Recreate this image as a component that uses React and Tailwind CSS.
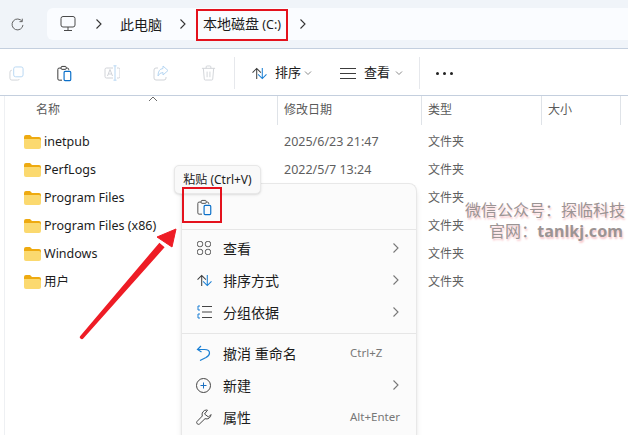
import React from 'react';

const FONT = 'font-["Noto_Sans","Noto_Sans_CJK_SC",sans-serif]';

const rows = [
  { name: 'inetpub', date: '2025/6/23 21:47' },
  { name: 'PerfLogs', date: '2022/5/7 13:24' },
  { name: 'Program Files', date: '' },
  { name: 'Program Files (x86)', date: '' },
  { name: 'Windows', date: '' },
  { name: '用户', date: '' },
];

const Chevron = ({ className = '' }) => (
  <svg width="8" height="12" viewBox="0 0 8 12" fill="none" stroke="currentColor" strokeWidth="1.1" className={className}>
    <path d="M1.5 1.5 6 6l-4.500 4.500" />
  </svg>
);

const SmallDown = () => (
  <svg width="8" height="6" viewBox="0 0 8 6" fill="none" stroke="#8a8a8a" strokeWidth="1">
    <path d="M1 1.500 4 4.500 7 1.500" />
  </svg>
);

const Folder = () => (
  <svg width="17" height="14" viewBox="0 0 17 14" className="shrink-0">
    <path d="M0 2q0-2 2-2h4l2 2h7q2 0 2 2v2H0z" fill="#eeaa10" />
    <path d="M0 4h15q2 0 2 2v6q0 2-2 2H2q-2 0-2-2z" fill="#fbd96f" />
  </svg>
);

const PasteIcon = ({ dark = '#3c3c3c', blue = '#0a6fc9' }) => (
  <svg width="15" height="17" viewBox="0 0 18 20" fill="none">
    <path d="M5 3.500H2.500q-1.500 0-1.500 1.500v11.500q0 1.500 1.500 1.500H6" stroke={dark} strokeWidth="1.200" />
    <path d="M11 3.500h1.500q1.500 0 1.500 1.500v1" stroke={dark} strokeWidth="1.200" />
    <rect x="5" y="1.500" width="6" height="3.500" rx="1" stroke={dark} strokeWidth="1.200" />
    <rect x="8.500" y="7.500" width="8" height="11" rx="1.200" stroke={blue} strokeWidth="1.400" />
  </svg>
);

const SortIcon = () => (
  <svg width="17" height="13" viewBox="0 0 18 14" fill="none" strokeWidth="1.100">
    <path d="M6 13V1.500M1.500 6 6 1.500 10.500 6" stroke="#3c3c3c" />
    <path d="M12 1v11.500M7.500 8l4.500 4.500L16.500 8" stroke="#1a7fd4" />
  </svg>
);

const ToolIcons = {
  copy: (
    <svg width="15" height="15" viewBox="0 0 16 16" fill="none">
      <path d="M3 4.500q-2 0-2 2V13q0 2 2 2h6q2 0 2-1" stroke="#d0d3d8" />
      <rect x="5" y="1" width="10" height="10.500" rx="2" stroke="#b6d6f2" />
    </svg>
  ),
  rename: (
    <svg width="16" height="16" viewBox="0 0 16 16" fill="none">
      <path d="M9 3H2.500Q1 3 1 4.500v7Q1 13 2.500 13H9M13 3h1.500Q16 3 16 4.500v7q0 1.500-1.500 1.500H13" stroke="#d0d3d8" />
      <path d="m3.500 11 2.500-6.500L8.500 11M4.500 9h3" stroke="#d0d3d8" />
      <path d="M11 1v14M9.500.8h3M9.500 15.200h3" stroke="#b6d6f2" />
    </svg>
  ),
  share: (
    <svg width="16" height="16" viewBox="0 0 16 16" fill="none">
      <path d="M5 3H3Q1 3 1 5v8q0 2 2 2h8q2 0 2-2v-1" stroke="#d0d3d8" />
      <path d="M10 1l5 4.500-5 4.500V7.500Q6.500 7.500 5 11 5 4 10 3.500z" stroke="#b6d6f2" />
    </svg>
  ),
  trash: (
    <svg width="15" height="16" viewBox="0 0 16 17" fill="none" stroke="#d0d3d8">
      <path d="M1 3.500h14M5.500 3.500V2q0-1 1-1h3q1 0 1 1v1.500M2.500 3.500l1 11.500q.1 1 1 1h7q.9 0 1-1l1-11.500M6.500 7v6M9.500 7v6" />
    </svg>
  ),
};

const MenuRow = ({ icon, label, hint, arrow }) => (
  <div className="flex h-8 items-center pl-[14px] pr-[16px]">
    <span className="flex w-[27px] shrink-0 justify-start">{icon}</span>
    <span className="flex-1 text-[14px] text-[#1c1c1c]">{label}</span>
    {hint && <span className="w-[50px] text-[11.500px] whitespace-nowrap text-[#777]">{hint}</span>}
    {arrow && <Chevron className="text-[#777]" />}
  </div>
);

const App = () => {
  return (
    <div className={`relative h-[435px] w-[628px] overflow-hidden bg-white ${FONT}`}>
      {/* address bar */}
      <div className="flex h-[49px] items-center border-b border-[#c4cfde] bg-[#f0f4f9] pl-[11px]">
        <svg width="13" height="13" viewBox="0 0 15 15" fill="none" stroke="#5c5c5c" strokeWidth="1.100" className="mr-[23px]">
          <path d="M12.800 4A6.300 6.300 0 1 0 13.800 8M13 .8V4.200H9.800" />
        </svg>
        <div className="flex h-8 flex-1 items-center rounded-l-md bg-[#fafcff] pl-[13px] text-[14px] text-[#1c1c1c]">
          <svg width="16" height="16" viewBox="0 0 15 16" fill="none" stroke="#4a4a4a" className="mr-[19px]">
            <rect x=".5" y=".5" width="14" height="10.500" rx="2" />
            <path d="M7.500 11v3M3.500 14.500h8" />
          </svg>
          <Chevron className="mr-[17px] text-[#333]" />
          <span>此电脑</span>
          <Chevron className="ml-[17px] mr-[16px] text-[#333]" />
          <span>
            本地磁盘<span className="text-[12.500px]"> (C:)</span>
          </span>
          <Chevron className="ml-[18px] text-[#333]" />
        </div>
      </div>

      {/* toolbar */}
      <div className="flex h-[47px] items-center border-b border-[#c4cfde] pl-[9px] pt-[2px] text-[13px] text-[#1c1c1c]">
        <span className="flex w-[48px]">{ToolIcons.copy}</span>
        <span className="flex w-[47px]"><PasteIcon /></span>
        <span className="flex w-[49px]">{ToolIcons.rename}</span>
        <span className="flex w-[48px]">{ToolIcons.share}</span>
        <span className="flex w-[33px]">{ToolIcons.trash}</span>
        <span className="mr-[16px] h-8 w-px bg-[#e6e8ec]" />
        <SortIcon />
        <span className="ml-[7px] mr-[3px]">排序</span>
        <SmallDown />
        <span className="ml-[28px] flex w-[16px] flex-col gap-[4px]">
          <span className="h-px bg-[#3c3c3c]" />
          <span className="h-px bg-[#3c3c3c]" />
          <span className="h-px bg-[#3c3c3c]" />
        </span>
        <span className="ml-[8px] mr-[5px]">查看</span>
        <SmallDown />
        <span className="ml-[16px] h-8 w-px bg-[#e6e8ec]" />
        <span className="ml-[16px] flex gap-[4px]">
          <span className="h-[3px] w-[3px] rounded-full bg-[#222]" />
          <span className="h-[3px] w-[3px] rounded-full bg-[#222]" />
          <span className="h-[3px] w-[3px] rounded-full bg-[#222]" />
        </span>
      </div>

      {/* file list */}
      <div className="ml-1 h-[340px] border-l border-[#eef0f3]">
        <div className="relative grid h-[29px] grid-cols-[272px_144px_120px_80px] text-[12px] text-[#5a5a5a]">
          <div className="pl-[31px] pt-[5px]">名称</div>
          <div className="border-l border-[#dfe3e8] pl-[6px] pt-[5px]">修改日期</div>
          <div className="border-l border-[#dfe3e8] pl-[6px] pt-[5px]">类型</div>
          <div className="border-l border-r border-[#dfe3e8] pl-[6px] pt-[5px]">大小</div>
          <svg width="10" height="6" viewBox="0 0 10 6" fill="none" stroke="#6a6a6a" className="absolute left-[143px] top-0">
            <path d="M1 5l4-4 4 4" />
          </svg>
        </div>
        <div className="pt-[3px]">
          {rows.map((row) => (
            <div key={row.name} className="grid h-7 grid-cols-[272px_144px_1fr] items-center text-[12.500px]">
              <div className="flex items-center gap-[3px] pl-[19px] text-[#1c1c1c]">
                <Folder />
                <span>{row.name}</span>
              </div>
              <div className="pl-[7px] text-[#5f5f5f]">{row.date}</div>
              <div className="pl-[7px] text-[12px] text-[#5f5f5f]">文件夹</div>
            </div>
          ))}
        </div>
      </div>

      {/* context menu */}
      <div className="absolute left-[181px] top-[183px] w-[236px] rounded-t-lg border border-b-0 border-[#e8e8e8] bg-[#fbfbfb] shadow-md">
        <div className="flex h-[46px] items-center border-b border-[#e6e6e6] pl-[15px] pt-[1px]">
          <PasteIcon dark="#555" />
        </div>
        <div className="border-b border-[#e6e6e6] pb-[5px] pt-[2px]">
          <MenuRow
            label="查看"
            arrow
            icon={
              <svg width="14" height="14" viewBox="0 0 15 15" fill="none" stroke="#4a4a4a" className="ml-px">
                <rect x=".5" y=".5" width="5.500" height="5.500" rx="2" />
                <rect x="9" y=".5" width="5.500" height="5.500" rx="2" />
                <rect x=".5" y="9" width="5.500" height="5.500" rx="2" />
                <rect x="9" y="9" width="5.500" height="5.500" rx="2" />
              </svg>
            }
          />
          <MenuRow label="排序方式" arrow icon={<SortIcon />} />
          <MenuRow
            label="分组依据"
            arrow
            icon={
              <svg width="15" height="14" viewBox="0 0 15 14" fill="none" className="ml-px">
                <path d="M3 1H1v4h2M3 9H1v4h2" stroke="#1a7fd4" />
                <path d="M5 1.500h10M5 7h10M5 12.500h10" stroke="#444" />
              </svg>
            }
          />
        </div>
        <div className="pb-[4px] pt-[3px]">
          <MenuRow
            label="撤消 重命名"
            hint="Ctrl+Z"
            icon={
              <svg width="15" height="16" viewBox="0 0 15 16" fill="none" stroke="#1a7fd4" strokeWidth="1.200">
                <path d="M5 1 1.500 4.500 5.500 7M1.500 4.500H8.500Q13.500 4.500 13.500 8 13.500 10.500 10 12.500L4 15.500" />
              </svg>
            }
          />
          <MenuRow
            label="新建"
            arrow
            icon={
              <svg width="15" height="15" viewBox="0 0 15 15" fill="none">
                <circle cx="7.500" cy="7.500" r="7" stroke="#444" />
                <path d="M7.500 4.500v6M4.500 7.500h6" stroke="#1a6fc0" />
              </svg>
            }
          />
          <MenuRow
            label="属性"
            hint="Alt+Enter"
            icon={
              <svg width="16" height="16" viewBox="0 0 16 16" fill="none" stroke="#4a4a4a">
                <path d="M10.500 1a4.500 4.500 0 0 0-4.200 6L1 12.500a1.800 1.800 0 0 0 2.500 2.500L9 9.700A4.500 4.500 0 0 0 15 5.500L12.500 8 8.500 5l3-3.800z" />
              </svg>
            }
          />
        </div>
      </div>

      {/* tooltip */}
      <div className="absolute left-[174px] top-[165px] flex h-[29px] w-[87px] items-center justify-center rounded-[5px] border border-[#e8e8e8] bg-[#f9f9f9] text-[12px] whitespace-nowrap text-[#1c1c1c] shadow-sm">
        粘贴 (Ctrl+V)
      </div>

      {/* red marks */}
      <div className="absolute left-[196px] top-[9px] h-8 w-[92px] border-2 border-[#e4121d]" />
      <div className="absolute left-[182px] top-[187px] h-[36px] w-[40px] border-2 border-[#e4121d]" />
      <svg width="110" height="125" viewBox="0 0 110 125" className="absolute left-[74px] top-[222px]">
        <path d="M6.500 113.700 85.400 20.700 90.600 25.300 9.500 116.300Q8 118 6.500 116.500 5 115.500 6.500 113.700z" fill="#ee1c25" />
        <path d="M102 7 83 15 98 25z" fill="#ee1c25" stroke="#ee1c25" strokeLinejoin="round" />
      </svg>

      {/* watermark */}
      <div className="absolute right-[3px] top-[200px] text-right text-[16px] leading-[21px] text-[#9b9494] [text-shadow:1px_2px_2px_#f7c4c8]">
        <div>微信公众号：探临科技</div>
        <div className="pr-[2px] tracking-[0.1px]">
          官网：<span className="font-bold">tanlkj.com</span>
        </div>
      </div>
    </div>
  );
};

export default App;
